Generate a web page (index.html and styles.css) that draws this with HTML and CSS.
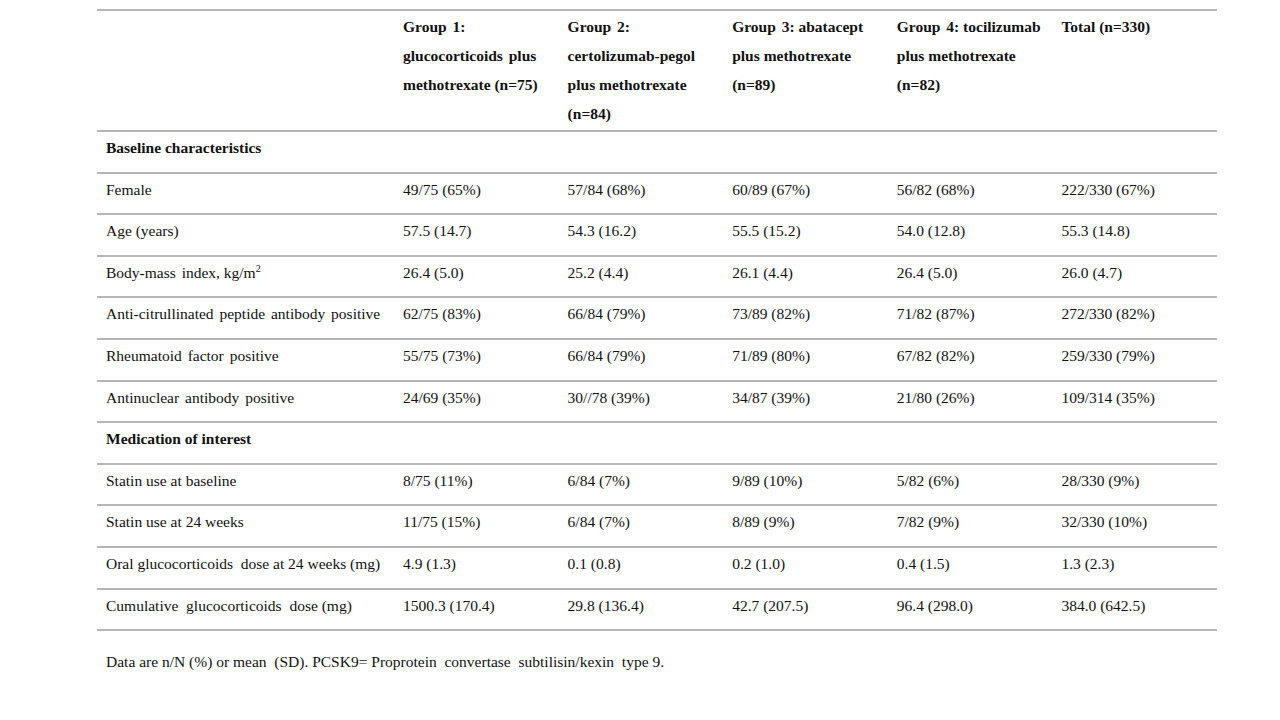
FILE: index.html
```html
<!DOCTYPE html>
<html>
<head>
<meta charset="utf-8">
<link rel="stylesheet" href="styles.css">
</head>
<body>
<div class="page">
<table class="data">
<colgroup>
<col class="c-label"><col class="c-num"><col class="c-num"><col class="c-num"><col class="c-num"><col class="c-num">
</colgroup>
<thead>
<tr>
<th></th>
<th><span class="ws">Group 1:</span><br><span class="ws">glucocorticoids plus</span><br>methotrexate (n=75)</th>
<th><span class="ws">Group 2:</span><br>certolizumab-pegol<br>plus methotrexate<br>(n=84)</th>
<th><span class="ws">Group 3:</span> abatacept<br>plus methotrexate<br>(n=89)</th>
<th><span class="ws">Group 4:</span> tocilizumab<br>plus methotrexate<br>(n=82)</th>
<th>Total (n=330)</th>
</tr>
</thead>
<tbody>
<tr class="section"><td colspan="6">Baseline characteristics</td></tr>
<tr><td>Female</td><td>49/75 (65%)</td><td>57/84 (68%)</td><td>60/89 (67%)</td><td>56/82 (68%)</td><td>222/330 (67%)</td></tr>
<tr><td>Age (years)</td><td>57.5 (14.7)</td><td>54.3 (16.2)</td><td>55.5 (15.2)</td><td>54.0 (12.8)</td><td>55.3 (14.8)</td></tr>
<tr><td><span class="ws">Body-mass index,</span> kg/m<sup>2</sup></td><td>26.4 (5.0)</td><td>25.2 (4.4)</td><td>26.1 (4.4)</td><td>26.4 (5.0)</td><td>26.0 (4.7)</td></tr>
<tr><td class="ws">Anti-citrullinated peptide antibody positive</td><td>62/75 (83%)</td><td>66/84 (79%)</td><td>73/89 (82%)</td><td>71/82 (87%)</td><td>272/330 (82%)</td></tr>
<tr><td class="ws">Rheumatoid factor positive</td><td>55/75 (73%)</td><td>66/84 (79%)</td><td>71/89 (80%)</td><td>67/82 (82%)</td><td>259/330 (79%)</td></tr>
<tr><td class="ws">Antinuclear antibody positive</td><td>24/69 (35%)</td><td>30//78 (39%)</td><td>34/87 (39%)</td><td>21/80 (26%)</td><td>109/314 (35%)</td></tr>
<tr class="section"><td colspan="6">Medication of interest</td></tr>
<tr><td>Statin use at baseline</td><td>8/75 (11%)</td><td>6/84 (7%)</td><td>9/89 (10%)</td><td>5/82 (6%)</td><td>28/330 (9%)</td></tr>
<tr><td>Statin use at 24 weeks</td><td>11/75 (15%)</td><td>6/84 (7%)</td><td>8/89 (9%)</td><td>7/82 (9%)</td><td>32/330 (10%)</td></tr>
<tr><td>Oral glucocorticoids&nbsp; dose at 24 weeks (mg)</td><td>4.9 (1.3)</td><td>0.1 (0.8)</td><td>0.2 (1.0)</td><td>0.4 (1.5)</td><td>1.3 (2.3)</td></tr>
<tr><td>Cumulative&nbsp; glucocorticoids&nbsp; dose (mg)</td><td>1500.3 (170.4)</td><td>29.8 (136.4)</td><td>42.7 (207.5)</td><td>96.4 (298.0)</td><td>384.0 (642.5)</td></tr>
</tbody>
</table>
<p class="note">Data are n/N (%) or mean&nbsp; (SD). PCSK9= Proprotein&nbsp; convertase&nbsp; subtilisin/kexin&nbsp; type 9.</p>
</div>
</body>
</html>
```
FILE: styles.css
```css
html, body {
  margin: 0;
  padding: 0;
  background: #ffffff;
}
body {
  font-family: "Liberation Serif", "Times New Roman", serif;
  font-size: 15.5px;
  color: #111111;
}
.page {
  padding: 9px 0 0 97px;
}
.data {
  border-collapse: collapse;
  width: 1120px;
  table-layout: fixed;
}
.c-label { width: 297px; }
.c-num { width: 164.6px; }
.data th, .data td {
  text-align: left;
  vertical-align: top;
  padding: 1px 0 9.6px 9px;
  line-height: 29px;
  white-space: nowrap;
  border-bottom: 2px solid #b6b6b6;
}
.data thead th {
  border-top: 2px solid #b6b6b6;
  font-weight: bold;
  padding-top: 1px;
  padding-bottom: 2px;
}
.data .section td {
  font-weight: bold;
}
.ws { word-spacing: 2px; }
.data sup {
  font-size: 10px;
  line-height: 0;
  vertical-align: 6px;
}
.note {
  margin: 21px 0 0 9px;
  line-height: 20px;
}
```
